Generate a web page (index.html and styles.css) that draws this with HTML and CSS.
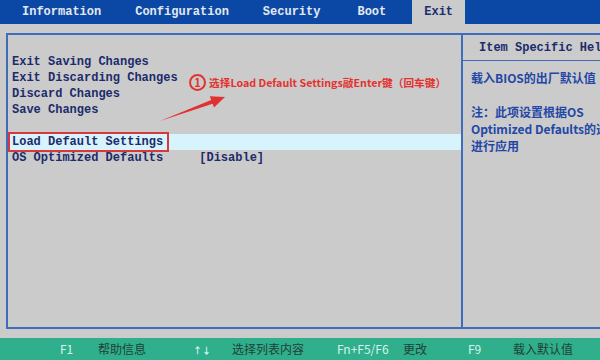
FILE: index.html
```html
<!DOCTYPE html>
<html lang="zh-CN">
<head>
  <meta charset="UTF-8">
  <meta name="viewport" content="width=device-width, initial-scale=1.0">
  <title>BIOS Exit</title>
  <link rel="stylesheet" href="styles.css">
</head>
<body>

  <div class="tabs">
    <span class="tab">Information</span>
    <span class="tab">Configuration</span>
    <span class="tab">Security</span>
    <span class="tab tab-boot">Boot</span>
    <span class="tab tab-exit active">Exit</span>
  </div>

  <div class="main">
    <div class="frame">
      <div class="menu">
        <div class="row">Exit Saving Changes</div>
        <div class="row">Exit Discarding Changes</div>
        <div class="row">Discard Changes</div>
        <div class="row">Save Changes</div>
        <div class="row"></div>
        <div class="row selected"><span class="mark">Load Default Settings</span></div>
        <div class="row">OS Optimized Defaults     [Disable]</div>

        <!-- annotation drawn over the screen -->
        <div class="note">
          <span class="num">1</span>
          <span class="note-text">选择Load Default Settings敲Enter键（回车键）</span>
        </div>
        <svg class="arrow" width="75" height="35" viewBox="0 0 75 35">
          <polygon points="5,31 57.6,13.7 59,17.5 70,7 54.8,6.2 56.2,10" fill="#e2322f"/>
        </svg>
      </div>

      <div class="help">
        <div class="help-title">Item Specific Help</div>
        <div class="help-body">
          <p>载入BIOS的出厂默认值</p>
          <p>&nbsp;</p>
          <p>注：此项设置根据OS</p>
          <p>Optimized Defaults的选项</p>
          <p>进行应用</p>
        </div>
      </div>
    </div>
  </div>

  <div class="footer">
    <span class="key">F1</span><span class="desc">帮助信息</span>
    <span class="key arrows">↑↓</span><span class="desc">选择列表内容</span>
    <span class="key">Fn+F5/F6</span><span class="desc">更改</span>
    <span class="key">F9</span><span class="desc">载入默认值</span>
  </div>

</body>
</html>
```

FILE: styles.css
```css
body {
  margin: 0;
  width: 600px;
  height: 360px;
  overflow: hidden;
  background: #cbcbcb;
  font-family: "Liberation Mono", "DejaVu Sans Mono", monospace;
}

/* top menu bar */
.tabs {
  display: flex;
  gap: 10px;
  height: 24px;
  padding-left: 10px;
  background: #0b48a6;
}

.tab {
  padding: 0 12px;
  line-height: 24px;
  font-size: 12px;
  font-weight: bold;
  color: #e4e8f0;
}

.tab-boot {
  margin-left: 3px;
}

.tab-exit {
  margin-left: 4px;
}

.tab.active {
  background: #cbcbcb;
  color: #1d2d72;
}

/* main framed area */
.main {
  height: 296px;
  padding: 9px 0 9px 6px;
}

.frame {
  display: grid;
  grid-template-columns: 453px 1fr;
  width: 620px;
  height: 292px;
  border: 2px solid #3f6cbb;
}

.menu {
  position: relative;
  padding-top: 19px;
  font-size: 12px;
  font-weight: bold;
  color: #1c2b6c;
}

.row {
  height: 16px;
  line-height: 16px;
  padding-left: 4px;
  white-space: pre;
}

.row.selected {
  background: #d7f3fb;
}

.mark {
  display: inline-block;
  margin-left: -2px;
  padding: 0 4px 0 2px;
  outline: 2px solid #d8383c;
}

.note {
  position: absolute;
  left: 181px;
  top: 39px;
  display: flex;
  align-items: center;
  gap: 3px;
  color: #e2322f;
  font-family: "Noto Sans CJK SC", "Noto Sans", sans-serif;
  font-weight: bold;
}

.num {
  width: 13px;
  height: 13px;
  border: 2px solid #e2322f;
  border-radius: 50%;
  font-size: 11px;
  line-height: 13px;
  text-align: center;
}

.note-text {
  font-size: 10.7px;
  white-space: nowrap;
}

.arrow {
  position: absolute;
  left: 147px;
  top: 55px;
}

/* help column */
.help {
  overflow: hidden;
  border-left: 2px solid #3f6cbb;
}

.help-title {
  height: 25px;
  line-height: 26px;
  padding-left: 16px;
  border-bottom: 1px solid #3f6cbb;
  font-size: 12px;
  font-weight: bold;
  color: #1c2b6c;
  white-space: nowrap;
}

.help-body {
  padding: 8px 0 0 8px;
  font-family: "Noto Sans CJK SC", "Noto Sans", sans-serif;
  font-size: 12px;
  font-weight: bold;
  color: #2447a6;
  white-space: nowrap;
}

.help-body p {
  margin: 0;
  height: 17px;
  line-height: 17px;
}

/* bottom key bar */
.footer {
  display: grid;
  grid-template-columns: 38px 95px 39px 105px 66px 65px 45px 1fr;
  align-items: center;
  height: 22px;
  padding-left: 60px;
  line-height: 22px;
  background: #2faf8c;
  font-family: "Noto Sans CJK SC", "Noto Sans", sans-serif;
  font-size: 12px;
}

.key {
  color: #d9f3ec;
}

.arrows {
  padding-top: 3px;
  line-height: 19px;
  font-size: 9px;
  font-weight: bold;
}

.desc {
  color: #223f38;
}
```
